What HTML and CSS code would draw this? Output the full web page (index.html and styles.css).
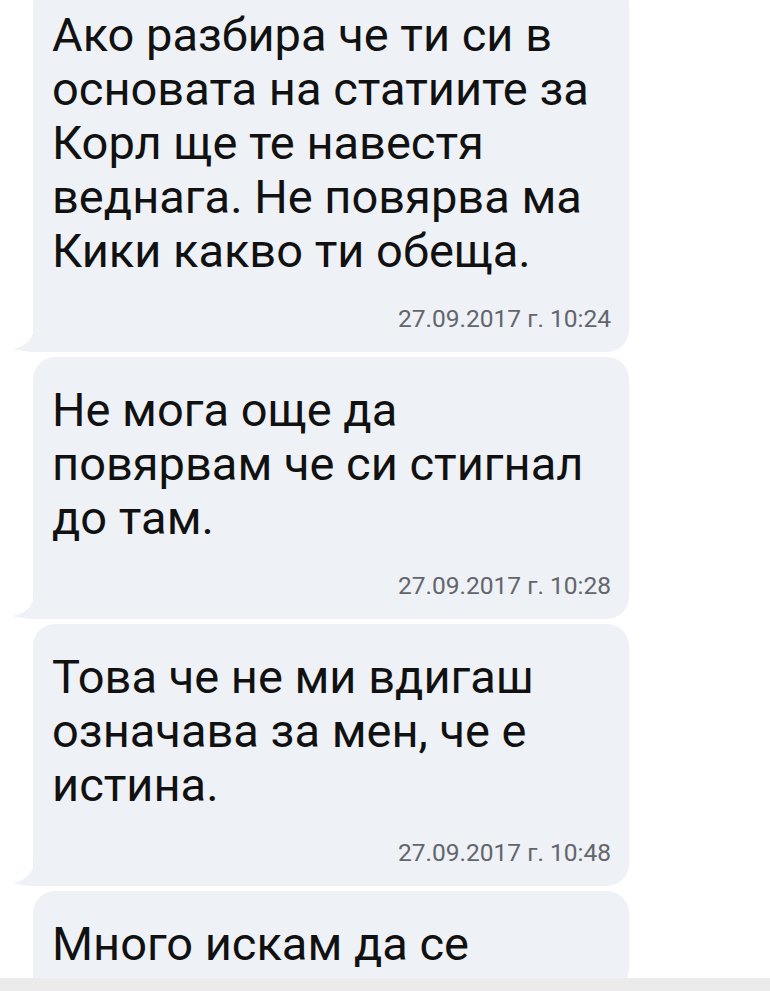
FILE: index.html
```html
<!DOCTYPE html>
<html lang="bg">
<head>
    <meta charset="UTF-8">
    <meta name="viewport" content="width=device-width, initial-scale=1.0">
    <title>Съобщения</title>
    <link rel="stylesheet" href="styles.css">
</head>
<body>
    <div class="thread">
        <!-- Message 1 -->
        <div class="bubble first">
            <p class="text">Ако разбира че ти си в основата на статиите за Корл ще те навестя веднага. Не повярва ма Кики какво ти обеща.</p>
            <p class="time">27.09.2017 г. 10:24</p>
            <svg class="tail" viewBox="0 0 24 26"><path d="M21 0 C21 12 14 20 0 23 C7 25 14 26 24 26 L24 0 Z"/></svg>
        </div>

        <!-- Message 2 -->
        <div class="bubble">
            <p class="text">Не мога още да повярвам че си стигнал до там.</p>
            <p class="time">27.09.2017 г. 10:28</p>
            <svg class="tail" viewBox="0 0 24 26"><path d="M21 0 C21 12 14 20 0 23 C7 25 14 26 24 26 L24 0 Z"/></svg>
        </div>

        <!-- Message 3 -->
        <div class="bubble">
            <p class="text">Това че не ми вдигаш означава за мен, че е истина.</p>
            <p class="time">27.09.2017 г. 10:48</p>
            <svg class="tail" viewBox="0 0 24 26"><path d="M21 0 C21 12 14 20 0 23 C7 25 14 26 24 26 L24 0 Z"/></svg>
        </div>

        <!-- Message 4 (continues below the fold) -->
        <div class="bubble">
            <p class="text">Много искам да се</p>
        </div>
    </div>

    <div class="bottom-bar"></div>
</body>
</html>
```

FILE: styles.css
```css
body {
    margin: 0;
    height: 991px;
    display: flex;
    flex-direction: column;
    background: #ffffff;
    font-family: Roboto, "Noto Sans", sans-serif;
    overflow: hidden;
}

.thread {
    flex: 1;
    overflow: hidden;
    display: flex;
    flex-direction: column;
    gap: 5px;
    padding-left: 33px;
}

.bubble {
    position: relative;
    flex-shrink: 0;
    width: 596px;
    box-sizing: border-box;
    background: #eef1f5;
    border-radius: 22px 22px 22px 0;
    padding: 26px 18px 20px 19px;
}

.bubble.first {
    margin-top: -18px;
}

.text {
    margin: 0;
    font-size: 47px;
    line-height: 54px;
    color: #111111;
}

.time {
    margin: 28px 0 0;
    text-align: right;
    font-size: 24.5px;
    line-height: 26px;
    color: #62666c;
}

.tail {
    position: absolute;
    left: -20px;
    bottom: 0;
    width: 24px;
    height: 26px;
    fill: #eef1f5;
}

.bottom-bar {
    height: 13px;
    flex-shrink: 0;
    background: #ebebeb;
}
```
